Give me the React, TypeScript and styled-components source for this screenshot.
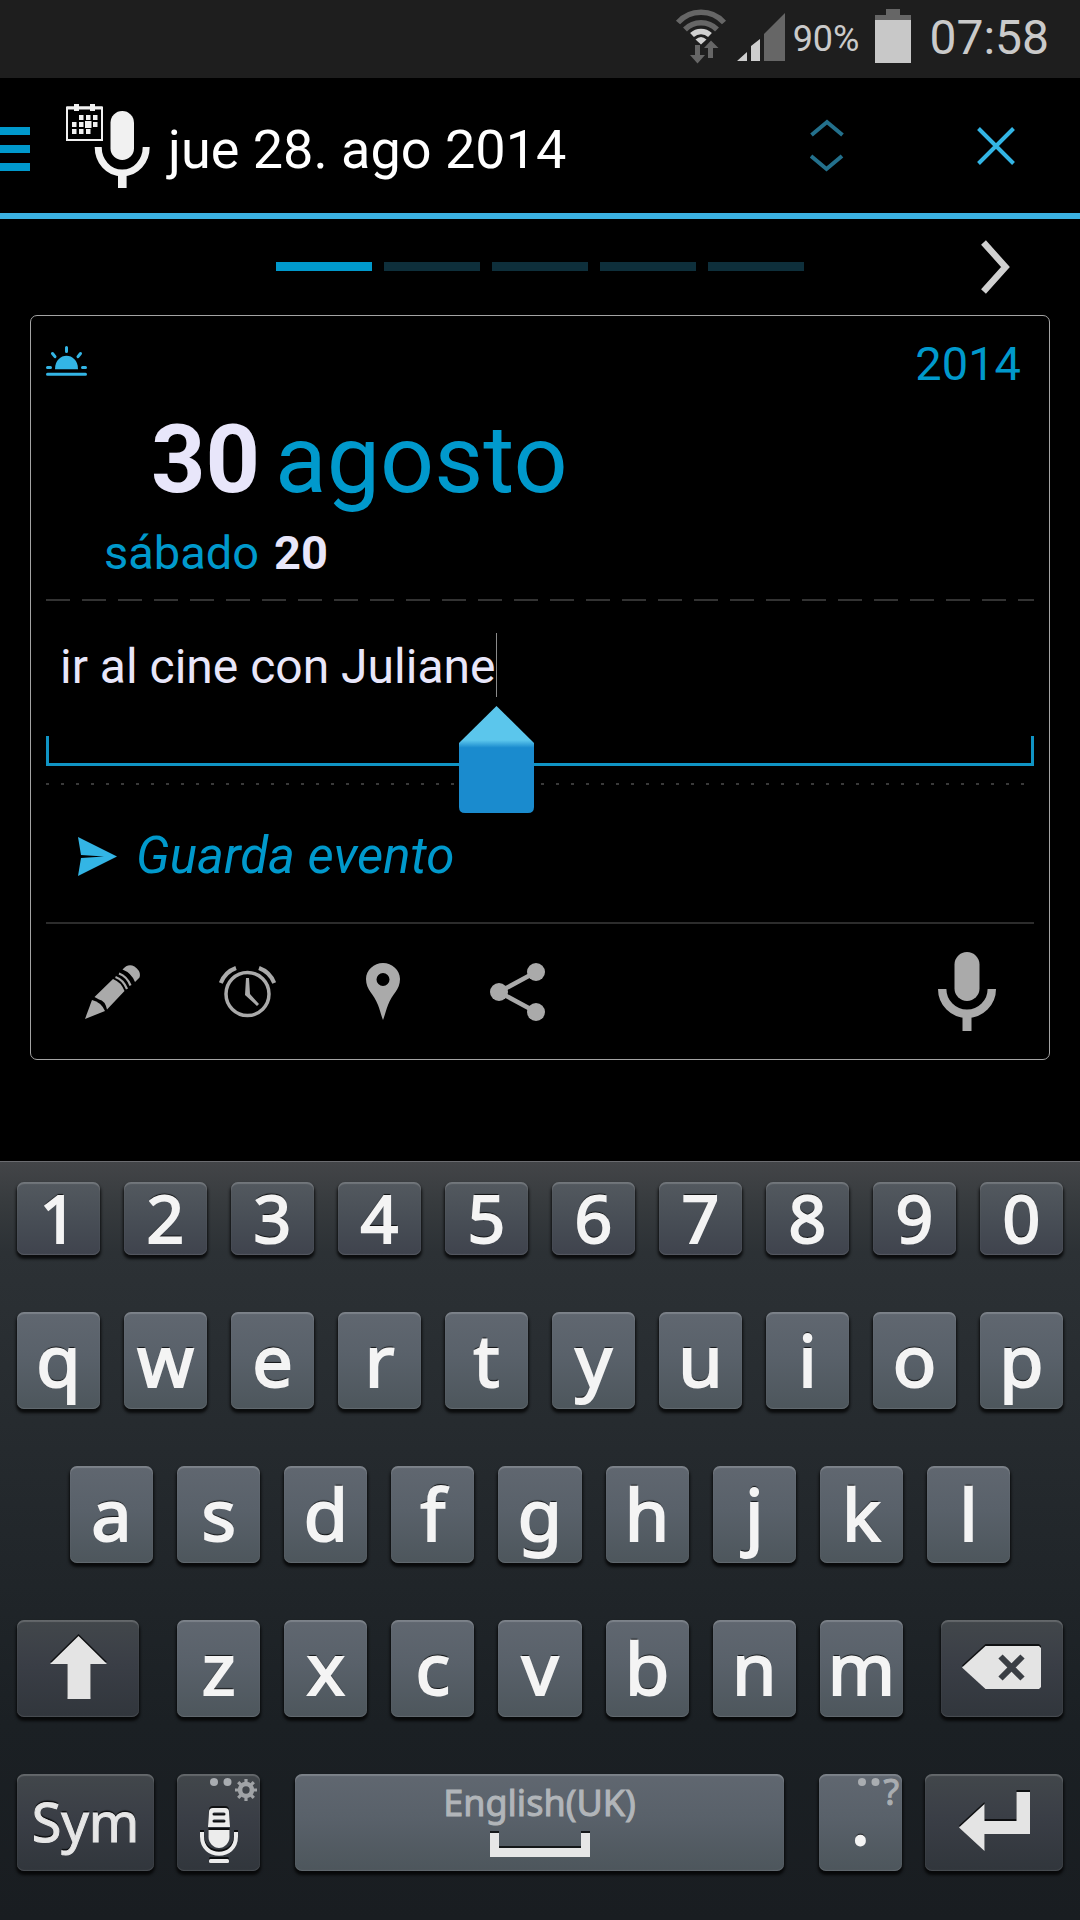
import React from "react";
import styled, { createGlobalStyle } from "styled-components";

const BLUE = "#0099cc";
const LIGHT_BLUE = "#33b5e5";
const PALE = "#e8e6fa";
const ICON_GREY = "#aaaaaa";

const GlobalStyle = createGlobalStyle`
  *, *::before, *::after { box-sizing: border-box; }
  body { margin: 0; background: #000; font-family: Roboto, "Liberation Sans", sans-serif; }
  button, input { font: inherit; color: inherit; background: none; border: 0; padding: 0; margin: 0; outline: none; }
  svg { display: block; flex: none; }
`;

const Screen = styled.div`
  display: flex;
  flex-direction: column;
  min-height: 100vh;
  background: #000;
`;

/* ---------- status bar ---------- */

const StatusBar = styled.div`
  display: flex;
  justify-content: flex-end;
  align-items: flex-start;
  height: 78px;
  padding: 9px 31px 0 0;
  background: #1e1e1e;
  color: #cacaca;
`;

const StatusIcons = styled.div`
  display: flex;
  gap: 10px;
  margin-right: 8px;
`;

const BatteryLevel = styled.span`
  font-size: 36px;
  line-height: 56px;
  padding-top: 2px;
  margin-right: 16px;
`;

const Clock = styled.span`
  font-size: 48px;
  line-height: 58px;
  margin-left: 18px;
`;

/* ---------- title bar ---------- */

const Header = styled.header`
  display: flex;
  align-items: center;
  height: 141px;
  border-bottom: 6px solid #3bb1e1;
`;

const MenuButton = styled.button`
  display: flex;
  flex-direction: column;
  gap: 10px;
  width: 30px;
  padding-top: 6px;
  margin-right: 36px;
`;

const MenuBar = styled.span`
  height: 8px;
  background: ${BLUE};
`;

const Title = styled.h1`
  flex: 1;
  margin: 0 0 0 18px;
  padding-top: 8px;
  color: #fff;
  font-size: 54px;
  font-weight: 400;
  line-height: 64px;
`;

const HeaderButton = styled.button`
  display: flex;
  justify-content: center;
  width: 169px;
`;

/* ---------- pager ---------- */

const Pager = styled.nav`
  display: grid;
  grid-template-columns: 1fr auto 1fr;
  align-items: center;
  height: 96px;
  padding-bottom: 1px;
`;

const Steps = styled.div`
  grid-column: 2;
  display: flex;
  gap: 12px;
`;

const Step = styled.button<{ $active?: boolean }>`
  width: 96px;
  height: 9px;
  background: ${(p) => (p.$active ? BLUE : "#0e2f3b")};
`;

const NextButton = styled.button`
  justify-self: end;
  margin-right: 69px;
`;

/* ---------- event card ---------- */

const Card = styled.main`
  margin: 0 30px 40px;
  padding: 20px 15px 0;
  border: 1px solid #a4a4a4;
  border-radius: 7px;
`;

const CardTop = styled.div`
  display: flex;
  justify-content: space-between;
  align-items: flex-start;
  padding-right: 13px;
  color: ${BLUE};
  font-size: 47px;
  line-height: 56px;

  svg { margin-top: 10px; }
`;

const DateLine = styled.div`
  display: flex;
  gap: 15px;
  margin-top: 12px;
  padding-left: 105px;
  color: ${BLUE};
  font-size: 95px;
  line-height: 112px;
`;

const TimeLine = styled.div`
  display: flex;
  gap: 15px;
  margin: 9px 0 18px;
  padding-left: 58px;
  color: ${BLUE};
  font-size: 47px;
  line-height: 56px;
`;

const Strong = styled.strong`
  color: ${PALE};
  font-weight: 700;
`;

const Dashes = styled.div`
  height: 2px;
  background: repeating-linear-gradient(90deg, #333 0 24px, transparent 24px 36px);
`;

const Dots = styled.div`
  height: 2px;
  margin-top: 17px;
  background: repeating-linear-gradient(90deg, #3a3a3a 0 3px, transparent 3px 15px);
`;

const Rule = styled.div`
  height: 2px;
  background: #2c2c2c;
`;

const Field = styled.label`
  display: flex;
  padding: 38px 16px 68px 14px;
  border-bottom: 3px solid #1094c4;
  background:
    linear-gradient(#1094c4, #1094c4) left bottom / 3px 27px no-repeat,
    linear-gradient(#1094c4, #1094c4) right bottom / 3px 27px no-repeat;
`;

const InputWrap = styled.span`
  position: relative;
  display: flex;
`;

const EventInput = styled.input`
  field-sizing: content;
  height: 56px;
  color: ${PALE};
  font-size: 48px;
  line-height: 56px;
  caret-color: transparent;
`;

const Caret = styled.span`
  position: absolute;
  right: -2px;
  top: -6px;
  width: 1px;
  height: 64px;
  background: #8a8a8a;
`;

const CaretHandle = styled.svg`
  position: absolute;
  right: -39px;
  top: 67px;
`;

const SaveButton = styled.button`
  display: flex;
  align-items: center;
  gap: 19px;
  margin: 41px 0 36px;
  padding-left: 32px;
  color: ${BLUE};
  font-size: 51px;
  font-style: italic;
  line-height: 60px;
`;

const Tools = styled.div`
  display: flex;
  height: 135px;
  margin-left: -1px;
`;

const ToolButton = styled.button<{ $end?: boolean }>`
  display: flex;
  align-items: center;
  justify-content: center;
  width: 135px;
  margin-left: ${(p) => (p.$end ? "auto" : "0")};
`;

/* ---------- keyboard ---------- */

const Keyboard = styled.section`
  display: flex;
  flex-direction: column;
  gap: 57px;
  margin-top: auto;
  padding: 20px 17px 49px;
  border-top: 1px solid #6b6c70;
  background: linear-gradient(#434548 0, #373b3e 40px, #2c3135 90px, #262b2f 260px, #1b2024 560px, #191d21 100%);
  font-family: "Noto Sans", "Open Sans", sans-serif;
`;

const KeyRow = styled.div<{ $inset?: number }>`
  display: flex;
  gap: 24px;
  padding: 0 ${(p) => p.$inset ?? 0}px;
`;

const ShiftRow = styled.div`
  display: grid;
  grid-template-columns: 122fr 725fr 122fr;
  gap: 38px;
`;

const BottomRow = styled.div`
  display: grid;
  grid-template-columns: 137fr 83fr 513fr 83fr 138fr;
  gap: 23px;
`;

const keyFaces = {
  number: "linear-gradient(#53595f, #474d55 55%, #3f434d)",
  letter: "linear-gradient(#606770, #59616a 45%, #4d565c)",
  dark: "linear-gradient(#42474b, #3a3e46 45%, #31363c)",
};

const Key = styled.button<{ $face: keyof typeof keyFaces }>`
  position: relative;
  flex: 1 1 0;
  min-width: 0;
  height: ${(p) => (p.$face === "number" ? 73 : 97)}px;
  display: flex;
  align-items: center;
  justify-content: center;
  padding-bottom: 4px;
  border-radius: 7px;
  background: ${(p) => keyFaces[p.$face]};
  box-shadow:
    inset 0 2px 1px rgba(255, 255, 255, 0.18),
    inset 0 -1px 1px rgba(255, 255, 255, 0.12),
    0 3px 3px 1px rgba(0, 0, 0, 0.75);
  color: #f4f4f4;
  font-size: ${(p) => (p.$face === "number" ? 66 : 72)}px;
  line-height: 1;
  -webkit-text-stroke: 2px currentColor;
  text-shadow: 0 -2px 1px rgba(0, 0, 0, 0.8);

  svg { filter: drop-shadow(0 -2px 0 rgba(0, 0, 0, 0.75)); }
`;

const IconKey = styled(Key)`
  padding-bottom: 2px;
`;

const WordKey = styled(Key)`
  color: #e6e6e6;
  font-size: 54px;
  -webkit-text-stroke-width: 1px;
`;

const VoiceKey = styled(Key)`
  align-items: flex-end;
  padding-bottom: 8px;
`;

const PeriodKey = styled(Key)`
  padding-bottom: 12px;
`;

const SpaceKey = styled(Key)`
  flex-direction: column;
  justify-content: flex-start;
  gap: 10px;
  margin: 0 12px;
  padding: 9px 0 0;
  color: #b1b5b9;
  font-size: 36px;
  line-height: 40px;
  -webkit-text-stroke-width: 1px;
  text-shadow: none;
`;

const Hint = styled.span`
  position: absolute;
  top: 4px;
  right: 3px;
  display: flex;
  gap: 3px;
  color: #a9adb1;
  font-size: 36px;
  line-height: 28px;
  -webkit-text-stroke-width: 1px;
  text-shadow: none;

  svg { filter: none; }
`;

/* ---------- drawings ---------- */

const WifiIcon = () => (
  <svg width="52" height="55" viewBox="0 0 52 55" fill="none">
    <path d="M3 13.5a31 31 0 0 1 46 0" stroke="#666" strokeWidth="5.5" />
    <path d="M10 20.5a22.500 22.500 0 0 1 32 0" stroke="#666" strokeWidth="5.500" />
    <path d="M17 26a13 13 0 0 1 18 0" stroke="#d0d0d0" strokeWidth="5.500" />
    <path d="M20.500 30.500q5.500-5 11 0L26 35.500z" fill="#d0d0d0" />
    <path d="M20 36h5v10h5l-7.500 8.500L15 46h5z" fill="#666" />
    <path d="M33 49h5V39h5.500L36 31.500 29 39h4z" fill="#666" />
  </svg>
);

const SignalIcon = () => (
  <svg width="48" height="55" viewBox="0 0 48 55">
    <path d="M0 52l10-9v9zM14 37l9-7v22h-9z" fill="#cecece" />
    <path d="M27 25L48 4v48H27z" fill="#666" />
  </svg>
);

const BatteryIcon = () => (
  <svg width="36" height="54" viewBox="0 0 36 54">
    <path d="M11 0h14v6h11v6H0V6h11z" fill="#666" />
    <path d="M0 11h36v43H0z" fill="#c8c8c8" />
  </svg>
);

const LogoIcon = () => (
  <svg width="84" height="84" viewBox="0 0 84 84" fill="#f1f1f1">
    <path d="M1 3.500h35v32.500H1z" fill="none" stroke="#f1f1f1" strokeWidth="2" />
    <path d="M1 2.500h35v3H1zM8 0h5v7H8zM24 0h5v7h-5z" />
    <path d="M13 11h4.500v5H13zM20 11h4.500v5H20zM27 11h4.500v5H27zM6 18h4.500v5H6zM13 18h4.500v5H13zM19 17h6.500v7H19zM27 18h4.500v5H27zM6 25h4.500v5H6zM13 25h4.500v5H13zM20 25h4.500v5H20z" />
    <rect x="44.500" y="7" width="23.500" height="49" rx="11.700" />
    <path d="M32.200 43c0 14 10 26 24 26s24-12 24-26" fill="none" stroke="#f1f1f1" strokeWidth="7" />
    <path d="M52 69h8.600v15H52z" />
  </svg>
);

const UpDownIcon = () => (
  <svg width="34" height="53" viewBox="0 0 34 53" fill="none" stroke="#23708c" strokeWidth="4">
    <path d="M1.500 16L17 3l15.500 13M1 37l15.500 13L32 37" />
  </svg>
);

const CloseIcon = () => (
  <svg width="38" height="38" viewBox="0 0 38 38" stroke={LIGHT_BLUE} strokeWidth="4">
    <path d="M1.500 1.500l35 35M36.500 1.500l-35 35" />
  </svg>
);

const NextIcon = () => (
  <svg width="30" height="54" viewBox="0 0 30 54" fill="none" stroke="#d0d0d0" strokeWidth="6.500">
    <path d="M2.500 2.500L24.500 27l-22 24.500" />
  </svg>
);

const SunriseIcon = () => (
  <svg width="42" height="30" viewBox="1 0 42 30" fill="none" stroke={LIGHT_BLUE} strokeWidth="3" strokeLinecap="round">
    <path d="M2.500 28.300h38M2.500 21.500h3M37.500 21.500h3M21.500 1.500v4M7.500 7.500l2.500 3.200M35.500 7.500l-2.500 3.200" />
    <path d="M10 23.300c0-18 23-18 23 0z" fill={LIGHT_BLUE} stroke="none" />
  </svg>
);

const SendIcon = () => (
  <svg width="39" height="39" viewBox="0 0 39 39" fill={LIGHT_BLUE}>
    <path d="M0 0l39 19.500L0 39l3-18 23-1.500L3 18z" />
  </svg>
);

const PencilIcon = () => (
  <svg width="56" height="56" viewBox="0 0 56 56" fill={ICON_GREY}>
    <path d="M0 55l7-19q9 2 13 11z" />
    <path d="M9.500 33L28 15q8 3 11.500 12L22 45.500q-2-9-8-10z" />
    <path d="M30.500 13q8 3 11.500 12" fill="none" stroke={ICON_GREY} strokeWidth="2.200" />
    <path d="M34 9.500q8 3 11.500 12" fill="none" stroke={ICON_GREY} strokeWidth="2.200" />
    <path d="M37.500 5.500Q43-1 49.500 2.500q7 5 5 11L50 18q-3.500-9-12.500-12.500z" />
  </svg>
);

const AlarmIcon = () => (
  <svg width="57" height="52" viewBox="0 0 57 52" fill="none" stroke={ICON_GREY} strokeWidth="3.500">
    <circle cx="28.500" cy="28" r="21.500" />
    <path d="M1.800 17Q6 6 17 2M55.200 17Q51 6 40 2" strokeWidth="4" />
    <path d="M27 12h3l1 16 9 10-2 2-12-11z" fill={ICON_GREY} stroke="none" />
  </svg>
);

const PinIcon = () => (
  <svg width="34" height="57" viewBox="0 0 34 57" fill={ICON_GREY} fillRule="evenodd">
    <path d="M17 0C26 0 34 7 34 16c0 11-8 15-12 26-2 5-3 10-5 15-2-5-3-10-5-15C8 31 0 27 0 16 0 7 8 0 17 0zm0 10a6.500 6.500 0 1 0 0 13 6.500 6.500 0 0 0 0-13z" />
  </svg>
);

const ShareIcon = () => (
  <svg width="55" height="58" viewBox="0 0 55 58" fill={ICON_GREY}>
    <path d="M46 9L9 29l37 20" fill="none" stroke={ICON_GREY} strokeWidth="4.500" />
    <circle cx="9" cy="29" r="9" />
    <circle cx="46" cy="9" r="9" />
    <circle cx="46" cy="49" r="9" />
  </svg>
);

const MicIcon = () => (
  <svg width="58" height="79" viewBox="0 0 58 79" fill={ICON_GREY}>
    <rect x="16.500" y="0" width="25" height="49" rx="12.500" />
    <path d="M4.200 37a24.800 24.800 0 0 0 49.600 0" fill="none" stroke={ICON_GREY} strokeWidth="8.400" />
    <path d="M24.500 62h9v17h-9z" />
  </svg>
);

const ShiftIcon = () => (
  <svg width="57" height="63" viewBox="0 0 57 63" fill="#e4e4e4">
    <path d="M28.500 0L57 28H40.500v35h-23V28H0z" />
  </svg>
);

const BackspaceIcon = () => (
  <svg width="79" height="43" viewBox="0 0 79 43" fill="#e4e4e4">
    <path d="M0 21.500L23.500 0H77l2 2v39l-2 2H23.500z" />
    <path d="M38.500 10.500l22 22M60.500 10.500l-22 22" stroke="#3a3e44" strokeWidth="6" />
  </svg>
);

const EnterIcon = () => (
  <svg width="71" height="59" viewBox="0 0 71 59" fill="#e4e4e4">
    <path d="M0 35.500L25.500 12v17h32V0H71v42H25.500v17z" />
  </svg>
);

const VoiceIcon = () => (
  <svg width="38" height="55" viewBox="0 0 38 55" fill="#ececec">
    <path fillRule="evenodd" d="M13 0h12q4 0 4 4l1 15H8L9 4q0-4 4-4zm1 4.500a1.500 1.500 0 0 0 0 3h10a1.500 1.500 0 0 0 0-3zm0 7a1.500 1.500 0 0 0 0 3h10a1.500 1.500 0 0 0 0-3z" />
    <path d="M8.500 22h21v7c0 6-5 11-10.500 11S8.500 35 8.500 29z" />
    <path d="M2 24v4.500c0 23 34 23 34 0V24" fill="none" stroke="#ececec" strokeWidth="4" />
    <rect x="9" y="51" width="20" height="4" rx="1.500" />
  </svg>
);

const TwoDots = () => (
  <svg width="22" height="8" viewBox="0 0 22 8" fill="#a9adb1">
    <circle cx="4" cy="4" r="4" />
    <circle cx="17.500" cy="4" r="4" />
  </svg>
);

const GearIcon = () => (
  <svg width="22" height="24" viewBox="-12 -12 24 24" fill="none" stroke="#a0a3a6">
    <circle r="6.500" strokeWidth="5" />
    <path
      d="M0-12V-8M0 12V8M-12 0H-8M12 0H8M-8.500-8.500l3 3M8.500 8.500l-3-3M-8.500 8.500l3-3M8.500-8.500l-3 3"
      strokeWidth="3.500"
    />
  </svg>
);

const SpaceIcon = () => (
  <svg width="100" height="24" viewBox="0 0 100 24" fill="#e6e6e6">
    <path d="M0 0h9v15h82V0h9v24H0z" />
  </svg>
);

const Letters = ({ chars, face = "letter" }: { chars: string; face?: "letter" | "number" }) => (
  <>
    {chars.split("").map((c) => (
      <Key key={c} $face={face}>{c}</Key>
    ))}
  </>
);

export default function App() {
  const [text, setText] = React.useState("ir al cine con Juliane");

  return (
    <Screen>
      <GlobalStyle />
      <StatusBar>
        <StatusIcons>
          <WifiIcon />
          <SignalIcon />
        </StatusIcons>
        <BatteryLevel>90%</BatteryLevel>
        <BatteryIcon />
        <Clock>07:58</Clock>
      </StatusBar>

      <Header>
        <MenuButton aria-label="Menú">
          <MenuBar />
          <MenuBar />
          <MenuBar />
        </MenuButton>
        <LogoIcon />
        <Title>jue 28. ago 2014</Title>
        <HeaderButton aria-label="Cambiar fecha"><UpDownIcon /></HeaderButton>
        <HeaderButton aria-label="Cerrar"><CloseIcon /></HeaderButton>
      </Header>

      <Pager>
        <Steps>
          {[0, 1, 2, 3, 4].map((i) => (
            <Step key={i} $active={i === 0} aria-label={`Página ${i + 1}`} />
          ))}
        </Steps>
        <NextButton aria-label="Siguiente"><NextIcon /></NextButton>
      </Pager>

      <Card>
        <CardTop>
          <SunriseIcon />
          <span>2014</span>
        </CardTop>
        <DateLine>
          <Strong>30</Strong>
          <span>agosto</span>
        </DateLine>
        <TimeLine>
          <span>sábado</span>
          <Strong>20</Strong>
        </TimeLine>
        <Dashes />
        <Field>
          <InputWrap>
            <EventInput aria-label="Evento" value={text} onChange={(e) => setText(e.target.value)} />
            <Caret />
            <CaretHandle width="75" height="107" viewBox="0 0 75 107">
              <defs>
                <linearGradient id="handle" x1="0" y1="0" x2="0" y2="1">
                  <stop offset="0.320" stopColor="#5bc6ec" />
                  <stop offset="0.390" stopColor="#1a8bce" />
                </linearGradient>
              </defs>
              <path d="M37.500 0L75 37v64q0 6-6 6H6q-6 0-6-6V37z" fill="url(#handle)" />
            </CaretHandle>
          </InputWrap>
        </Field>
        <Dots />
        <SaveButton>
          <SendIcon />
          Guarda evento
        </SaveButton>
        <Rule />
        <Tools>
          <ToolButton aria-label="Editar"><PencilIcon /></ToolButton>
          <ToolButton aria-label="Alarma"><AlarmIcon /></ToolButton>
          <ToolButton aria-label="Lugar"><PinIcon /></ToolButton>
          <ToolButton aria-label="Compartir"><ShareIcon /></ToolButton>
          <ToolButton aria-label="Dictar" $end><MicIcon /></ToolButton>
        </Tools>
      </Card>

      <Keyboard>
        <KeyRow><Letters chars="1234567890" face="number" /></KeyRow>
        <KeyRow><Letters chars="qwertyuiop" /></KeyRow>
        <KeyRow $inset={53}><Letters chars="asdfghjkl" /></KeyRow>
        <ShiftRow>
          <IconKey $face="dark" aria-label="Shift"><ShiftIcon /></IconKey>
          <KeyRow><Letters chars="zxcvbnm" /></KeyRow>
          <IconKey $face="dark" aria-label="Backspace"><BackspaceIcon /></IconKey>
        </ShiftRow>
        <BottomRow>
          <WordKey $face="dark">Sym</WordKey>
          <VoiceKey $face="dark" aria-label="Voice input">
            <Hint><TwoDots /><GearIcon /></Hint>
            <VoiceIcon />
          </VoiceKey>
          <SpaceKey $face="letter">
            English(UK)
            <SpaceIcon />
          </SpaceKey>
          <PeriodKey $face="letter">
            <Hint><TwoDots />?</Hint>
            .
          </PeriodKey>
          <IconKey $face="dark" aria-label="Enter"><EnterIcon /></IconKey>
        </BottomRow>
      </Keyboard>
    </Screen>
  );
}
